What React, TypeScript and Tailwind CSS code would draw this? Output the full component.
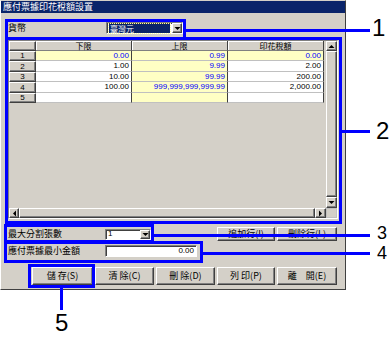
import React from 'react'

const cjk = "font-['Noto_Sans_CJK_TC','Liberation_Sans',sans-serif]"
const num = "font-['Liberation_Sans',Arial,sans-serif]"
const raised =
  'bg-[#d4d0c8] border border-t-white border-l-white border-r-[#404040] border-b-[#404040] shadow-[inset_-1px_-1px_0_#808080]'
const sunken =
  'bg-white border border-t-[#808080] border-l-[#808080] border-r-white border-b-white shadow-[inset_1px_1px_0_#404040]'
const yellow = 'bg-[#ffffc4]'

type Dir = 'up' | 'down' | 'left' | 'right'

function Arrow({ dir }: { dir: Dir }) {
  const pts: Record<Dir, string> = {
    up: '0.5,4 6.5,4 3.5,1',
    down: '0.5,1 6.5,1 3.5,4',
    left: '4,0.5 4,6.5 1,3.5',
    right: '1,0.5 1,6.5 4,3.5',
  }
  const vertical = dir === 'up' || dir === 'down'
  return (
    <svg width={vertical ? 7 : 5} height={vertical ? 5 : 7} viewBox={vertical ? '0 0 7 5' : '0 0 5 7'}>
      <polygon points={pts[dir]} fill="#000" />
    </svg>
  )
}

const rows = [
  { n: '1', a: '0.00', b: '0.99', c: '0.00', ay: true, cy: true, h: 'h-[10px]' },
  { n: '2', a: '1.00', b: '9.99', c: '2.00', ay: false, cy: false, h: 'h-[11px]' },
  { n: '3', a: '10.00', b: '99.99', c: '200.00', ay: false, cy: false, h: 'h-[10px]' },
  { n: '4', a: '100.00', b: '999,999,999,999.99', c: '2,000.00', ay: false, cy: false, h: 'h-[11px]' },
  { n: '5', a: '', b: '', c: '', ay: false, cy: false, h: 'h-[10px]' },
]

function Cell({ text, hl }: { text: string; hl: boolean }) {
  return (
    <div
      className={`w-[96px] h-full flex items-center justify-end pr-[2px] border-r border-b border-r-[#404040] border-b-[#c0c0c0] text-[8px] leading-none ${num} ${
        hl ? `${yellow} text-[#0000ff]` : 'bg-white text-black'
      }`}
    >
      {text}
    </div>
  )
}

function Button({ label, w, h }: { label: string; w: string; h: string }) {
  return (
    <div className={`${raised} ${w} ${h} flex items-center justify-center text-[9px] text-black ${cjk}`}>
      {label}
    </div>
  )
}

export default function App() {
  return (
    <div className="relative w-[391px] h-[340px] bg-white overflow-hidden">
      {/* Window */}
      <div className="w-[346px] h-[290px] bg-[#d4d0c8] border border-l-white border-t-[#d4d0c8] border-r-[#404040] border-b-[#404040] flex flex-col">
        <div className={`h-[12px] bg-[#0a246a] text-white text-[9px] leading-[12px] pl-[2px] ${cjk}`}>
          應付票據印花稅額設置
        </div>

        {/* Currency */}
        <div className="mt-[9px] h-[12px] flex items-center">
          <span className={`ml-[7px] w-[98px] text-[9px] text-black ${cjk}`}>貨幣</span>
          <div className={`${sunken} w-[77px] h-[12px] flex items-center pl-[2px]`}>
            <div className="flex-1 h-[9px] mr-[2px] bg-[#0a246a] outline outline-1 outline-dotted outline-[#ffffa0] flex items-center">
              <span className={`pl-[1px] text-white text-[8px] leading-[9px] ${cjk}`}>臺灣元</span>
            </div>
            <div className={`${raised} w-[10px] h-[10px] flex items-center justify-center`}>
              <Arrow dir="down" />
            </div>
          </div>
        </div>

        {/* Grid */}
        <div className="mt-[6px] ml-[7px] w-[330px] h-[179px] border border-t-[#808080] border-l-[#808080] border-r-white border-b-white flex flex-col">
          <div className="flex h-[167px]">
            <div className="w-[317px] flex flex-col">
              <div className="flex h-[10px]">
                <div className={`${raised} w-[27px] h-full`} />
                {['下限', '上限', '印花稅額'].map((t) => (
                  <div
                    key={t}
                    className={`w-[96px] h-full bg-[#d4d0c8] border-r border-b border-r-[#404040] border-b-[#808080] shadow-[inset_1px_1px_0_#ffffff] flex items-center justify-center text-[8px] leading-[8px] text-black ${cjk}`}
                  >
                    {t}
                  </div>
                ))}
              </div>
              {rows.map((r) => (
                <div key={r.n} className={`flex ${r.h}`}>
                  <div className={`${raised} w-[27px] h-full flex items-center justify-center text-[8px] leading-none text-black ${num}`}>
                    {r.n}
                  </div>
                  <Cell text={r.a} hl={r.ay} />
                  <Cell text={r.b} hl={true} />
                  <Cell text={r.c} hl={r.cy} />
                </div>
              ))}
            </div>
            <div className="w-[11px] flex flex-col">
              <div className={`${raised} h-[10px] flex items-center justify-center`}>
                <Arrow dir="up" />
              </div>
              <div className={`${raised} flex-1`} />
              <div className={`${raised} h-[11px] flex items-center justify-center`}>
                <Arrow dir="down" />
              </div>
            </div>
          </div>
          <div className="flex h-[10px]">
            <div className={`${raised} w-[10px] flex items-center justify-center`}>
              <Arrow dir="left" />
            </div>
            <div className={`${raised} w-[296px]`} />
            <div className={`${raised} w-[11px] flex items-center justify-center`}>
              <Arrow dir="right" />
            </div>
            <div className="w-[11px] bg-[#d4d0c8] border border-[#c0c0c0]" />
          </div>
        </div>

        {/* Max split count */}
        <div className="mt-[8px] h-[14px] flex items-center">
          <span className={`ml-[7px] w-[97px] text-[9px] text-black ${cjk}`}>最大分割張數</span>
          <div className={`${sunken} w-[46px] h-[11px] flex items-center`}>
            <span className={`flex-1 pl-[2px] text-[8px] leading-none text-black ${num}`}>1</span>
            <div className={`${raised} w-[10px] h-[9px] flex items-center justify-center`}>
              <Arrow dir="down" />
            </div>
          </div>
          <div className="ml-[66px] flex gap-[2px]">
            <Button label="追加行(I)" w="w-[58px]" h="h-[14px]" />
            <Button label="刪除行(L)" w="w-[60px]" h="h-[14px]" />
          </div>
        </div>

        {/* Min amount */}
        <div className="mt-[4px] h-[12px] flex items-center">
          <span className={`ml-[7px] w-[97px] text-[9px] text-black ${cjk}`}>應付票據最小金額</span>
          <div className={`${sunken} w-[92px] h-[12px] flex items-center justify-end pr-[2px] text-[8px] leading-none text-black ${num}`}>
            0.00
          </div>
        </div>

        {/* Buttons */}
        <div className="mt-[10px] ml-[31px] flex gap-[2px]">
          <Button label="儲 存(S)" w="w-[61px]" h="h-[18px]" />
          <Button label="清 除(C)" w="w-[59px]" h="h-[18px]" />
          <Button label="刪 除(D)" w="w-[59px]" h="h-[18px]" />
          <Button label="列 印(P)" w="w-[58px]" h="h-[18px]" />
          <Button label="離　開(E)" w="w-[60px]" h="h-[18px]" />
        </div>
      </div>

      {/* Callout annotations */}
      <div className="absolute left-[5px] top-[19px] w-[181px] h-[21px] border-[3px] border-[#0000ff]" />
      <div className="absolute left-[186px] top-[29px] w-[184px] h-[3px] bg-[#0000ff]" />
      <div className="absolute left-[5px] top-[37px] w-[337px] h-[187px] border-[3px] border-[#0000ff]" />
      <div className="absolute left-[342px] top-[130px] w-[28px] h-[3px] bg-[#0000ff]" />
      <div className="absolute left-[4px] top-[224px] w-[150px] h-[19px] border-[3px] border-[#0000ff]" />
      <div className="absolute left-[154px] top-[234px] w-[216px] h-[3px] bg-[#0000ff]" />
      <div className="absolute left-[4px] top-[241px] w-[199px] h-[22px] border-[3px] border-[#0000ff]" />
      <div className="absolute left-[203px] top-[252px] w-[167px] h-[3px] bg-[#0000ff]" />
      <div className="absolute left-[28px] top-[264px] w-[67px] h-[24px] border-[3px] border-[#0000ff]" />
      <div className="absolute left-[60px] top-[288px] w-[3px] h-[22px] bg-[#0000ff]" />

      <span className={`absolute left-[372px] top-[16px] text-[24px] leading-[24px] text-black ${num}`}>1</span>
      <span className={`absolute left-[376px] top-[119px] text-[24px] leading-[24px] text-black ${num}`}>2</span>
      <span className={`absolute left-[377px] top-[226px] text-[18px] leading-[15px] text-black ${num}`}>3</span>
      <span className={`absolute left-[377px] top-[246px] text-[18px] leading-[15px] text-black ${num}`}>4</span>
      <span className={`absolute left-[55px] top-[311px] text-[24px] leading-[24px] text-black ${num}`}>5</span>
    </div>
  )
}
